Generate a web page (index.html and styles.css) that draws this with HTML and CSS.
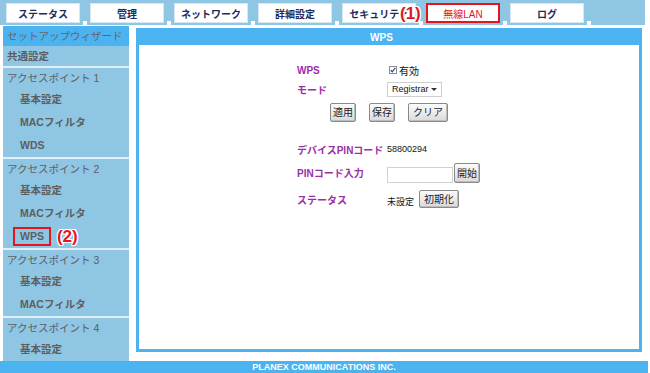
FILE: index.html
```html
<!DOCTYPE html>
<html lang="ja">
<head>
    <meta charset="UTF-8">
    <meta name="viewport" content="width=device-width, initial-scale=1.0">
    <title>無線LAN - WPS</title>
    <link rel="stylesheet" href="styles.css">
</head>
<body>
<div id="page">

    <div id="topbar">
        <div class="tab">ステータス</div><span class="notch"></span>
        <div class="tab">管理</div><span class="notch"></span>
        <div class="tab">ネットワーク</div><span class="notch"></span>
        <div class="tab">詳細設定</div><span class="notch"></span>
        <div class="tab tab-sec">セキュリティ<span class="mark mark-over">(1)</span></div><span class="notch"></span>
        <div class="tab active">無線LAN</div><span class="notch"></span>
        <div class="tab">ログ</div><span class="notch"></span>
    </div>

    <div id="main">
        <div id="sidebar">
            <div class="nav-top">セットアップウィザード</div>
            <div class="nav-head bold">共通設定</div>

            <div class="group">
                <div class="nav-head">アクセスポイント 1</div>
                <div class="nav-item">基本設定</div>
                <div class="nav-item">MACフィルタ</div>
                <div class="nav-item">WDS</div>
            </div>

            <div class="group">
                <div class="nav-head">アクセスポイント 2</div>
                <div class="nav-item">基本設定</div>
                <div class="nav-item">MACフィルタ</div>
                <div class="nav-item nav-current"><span class="current-box">WPS</span><span class="mark">(2)</span></div>
            </div>

            <div class="group">
                <div class="nav-head">アクセスポイント 3</div>
                <div class="nav-item">基本設定</div>
                <div class="nav-item">MACフィルタ</div>
            </div>

            <div class="group">
                <div class="nav-head">アクセスポイント 4</div>
                <div class="nav-item">基本設定</div>
            </div>
        </div>

        <div id="panel">
            <div class="panel-title">WPS</div>
            <div class="panel-body">
                <div class="wps-form">
                    <div class="row r-wps">
                        <span class="label">WPS</span>
                        <span class="value">
                            <svg class="check" width="8" height="8" viewBox="0 0 8 8">
                                <rect x="0.5" y="0.5" width="7" height="7" fill="#fff" stroke="#8c8c8c"/>
                                <path d="M1.8 4.2 L3.3 5.8 L6.3 1.9" fill="none" stroke="#2c4fa3" stroke-width="1.3"/>
                            </svg>
                            <span class="check-text">有効</span>
                        </span>
                    </div>
                    <div class="row r-mode">
                        <span class="label">モード</span>
                        <span class="value">
                            <span class="select">Registrar<span class="caret"></span></span>
                        </span>
                    </div>
                    <div class="buttons">
                        <button class="btn">適用</button>
                        <button class="btn">保存</button>
                        <button class="btn wide">クリア</button>
                    </div>
                    <div class="row r-pin">
                        <span class="label">デバイスPINコード</span>
                        <span class="value">58800294</span>
                    </div>
                    <div class="row r-input">
                        <span class="label">PINコード入力</span>
                        <span class="value bottom">
                            <input type="text" class="pin-input">
                            <button class="btn tall">開始</button>
                        </span>
                    </div>
                    <div class="row r-status">
                        <span class="label">ステータス</span>
                        <span class="value bottom">
                            <span class="status-text">未設定</span>
                            <button class="btn wide init">初期化</button>
                        </span>
                    </div>
                </div>
            </div>
        </div>
    </div>

    <div id="footer">PLANEX COMMUNICATIONS INC.</div>
</div>
</body>
</html>
```

FILE: styles.css
```css
body {
    margin: 0;
    padding: 0;
    background: #fff;
    font-family: "Liberation Sans", "Noto Sans CJK JP", sans-serif;
    font-size: 10px;
    color: #222;
}

#page {
    width: 650px;
    height: 373px;
    display: flex;
    flex-direction: column;
    overflow: hidden;
}

/* top menu */
#topbar {
    width: 645px;
    height: 25px;
    flex: none;
    box-sizing: border-box;
    padding-left: 6px;
    background: #8ec6e4;
    display: flex;
    align-items: flex-end;
}

.tab {
    width: 74px;
    height: 20px;
    margin-bottom: 2px;
    box-sizing: border-box;
    background: #fff;
    border: 1px solid #d4e7f2;
    display: flex;
    align-items: center;
    justify-content: center;
    font-size: 10px;
    font-weight: bold;
    color: #1e2b5b;
}

.tab.active {
    border: 2px solid #e3161e;
    color: #e3161e;
    font-weight: normal;
}

.tab-sec {
    position: relative;
}

.notch {
    width: 4px;
    height: 4px;
    margin: 0 3px;
    background: #fff;
}

.mark {
    font-family: "Liberation Sans", sans-serif;
    font-size: 17px;
    font-weight: bold;
    color: #e3161e;
    line-height: 19px;
    text-shadow: 1px 0 #fff, -1px 0 #fff, 0 1px #fff, 0 -1px #fff,
                 1px 1px #fff, -1px -1px #fff, 1px -1px #fff, -1px 1px #fff;
}

.mark-over {
    position: absolute;
    left: 57px;
    top: 0;
}

/* main area */
#main {
    display: flex;
    height: 335px;
    margin-top: 1px;
    flex: none;
}

#sidebar {
    width: 126px;
    margin-left: 3px;
    background: #8ec6e4;
    font-size: 10.5px;
    color: #5e5e5e;
}

.nav-top {
    height: 20px;
    line-height: 20px;
    padding-left: 4px;
    background: #4bb3ef;
    color: #666;
}

.nav-head {
    height: 20px;
    line-height: 20px;
    padding-left: 4px;
}

.bold {
    font-weight: bold;
}

.group {
    border-top: 2px solid #e1f0f8;
}

.nav-item {
    height: 23px;
    line-height: 23px;
    padding-left: 17px;
    font-weight: bold;
}

.nav-current {
    display: flex;
    align-items: center;
    padding-left: 10px;
}

.current-box {
    height: 15px;
    line-height: 15px;
    padding: 0 5px;
    border: 2px solid #e3161e;
}

.nav-current .mark {
    margin-left: 6px;
}

#panel {
    width: 506px;
    height: 324px;
    margin-left: 7px;
    margin-top: 2px;
    box-sizing: border-box;
    border: 3px solid #4bb3ef;
    display: flex;
    flex-direction: column;
}

.panel-title {
    height: 14px;
    line-height: 13px;
    padding-right: 15px;
    background: #4bb3ef;
    color: #fff;
    font-weight: bold;
    font-size: 10px;
    text-align: center;
}

.panel-body {
    flex: 1;
    background: #fff;
}

/* WPS form */
.wps-form {
    width: 184px;
    margin: 0 auto;
    padding-top: 16px;
}

.row {
    display: flex;
    align-items: center;
}

.label {
    width: 90px;
    flex: none;
    font-weight: bold;
    font-size: 10px;
    color: #9b2fa7;
}

.value {
    display: flex;
    align-items: center;
    font-size: 9px;
    color: #111;
}

.value.bottom {
    align-self: flex-end;
    align-items: flex-end;
}

.r-wps {
    height: 18px;
}

.check {
    margin-left: 2px;
    margin-right: 2px;
}

.check-text {
    font-size: 10px;
}

.r-mode {
    height: 20px;
}

.select {
    width: 55px;
    height: 15px;
    box-sizing: border-box;
    padding: 0 4px;
    border: 1px solid #cfcfcf;
    display: flex;
    align-items: center;
    justify-content: space-between;
    font-size: 9px;
}

.caret {
    width: 0;
    height: 0;
    border-left: 3px solid transparent;
    border-right: 3px solid transparent;
    border-top: 3px solid #333;
}

.buttons {
    display: flex;
    justify-content: center;
    gap: 13px;
    margin-top: 4px;
}

.btn {
    height: 19px;
    padding: 0 2px;
    margin: 0;
    border: 1px solid #8a8a8a;
    border-radius: 2px;
    background: linear-gradient(#fbfbfb, #dadada);
    box-shadow: inset -1px -1px #bdbdbd;
    font-family: "Liberation Sans", "Noto Sans CJK JP", sans-serif;
    font-size: 10px;
    color: #222;
    line-height: 15px;
}

.btn.wide {
    padding: 0 4px;
}

.btn.tall {
    height: 20px;
    margin-left: 1px;
}

.r-pin {
    height: 18px;
    margin-top: 18px;
}

.r-input {
    height: 28px;
}

.r-input .value {
    padding-bottom: 3px;
}

.pin-input {
    width: 66px;
    height: 16px;
    box-sizing: border-box;
    margin: 0;
    padding: 0 2px;
    border: 1px solid #d2d2d2;
    font-size: 9px;
}

.r-status {
    height: 22px;
    margin-top: 2px;
}

.r-status .value {
    padding-bottom: 2px;
}

.status-text {
    line-height: 12px;
}

.btn.init {
    height: 18px;
    margin-left: 5px;
}

#footer {
    width: 648px;
    height: 12px;
    background: #4bb3ef;
    color: #fff;
    font-size: 9px;
    font-weight: bold;
    line-height: 12px;
    text-align: center;
}
```
